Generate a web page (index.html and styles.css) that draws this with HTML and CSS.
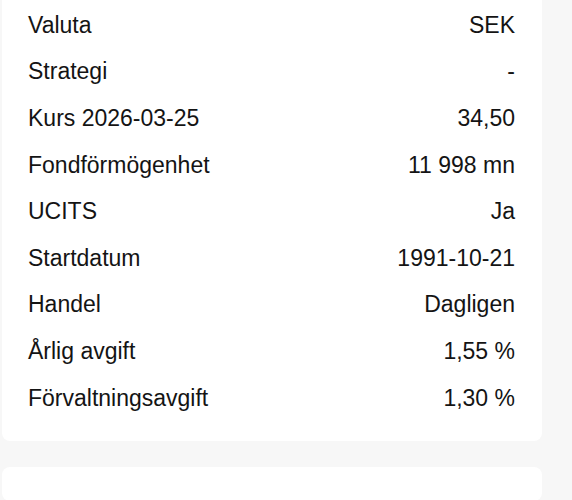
FILE: index.html
```html
<!DOCTYPE html>
<html lang="sv">
<head>
<meta charset="utf-8">
<link rel="stylesheet" href="styles.css">
</head>
<body>
<main class="page">
  <section class="card card-facts">
    <dl class="facts">
      <div class="row"><dt>Valuta</dt><dd>SEK</dd></div>
      <div class="row"><dt>Strategi</dt><dd>-</dd></div>
      <div class="row"><dt>Kurs 2026-03-25</dt><dd>34,50</dd></div>
      <div class="row"><dt>Fondförmögenhet</dt><dd>11 998 mn</dd></div>
      <div class="row"><dt>UCITS</dt><dd>Ja</dd></div>
      <div class="row"><dt>Startdatum</dt><dd>1991-10-21</dd></div>
      <div class="row"><dt>Handel</dt><dd>Dagligen</dd></div>
      <div class="row"><dt>Årlig avgift</dt><dd>1,55 %</dd></div>
      <div class="row"><dt>Förvaltningsavgift</dt><dd>1,30 %</dd></div>
    </dl>
  </section>
  <section class="card card-next"></section>
</main>
</body>
</html>
```
FILE: styles.css
```css
html, body {
  margin: 0;
  padding: 0;
  background: #f7f7f7;
}
body {
  font-family: "Liberation Sans", Arial, sans-serif;
  color: #141414;
}
.page {
  width: 540px;
  margin-left: 2px;
  display: flex;
  flex-direction: column;
  gap: 26px;
}
.card {
  background: #ffffff;
  border-radius: 8px;
}
.card-facts {
  margin-top: -18px;
  padding: 20px 27px 20px 26px;
}
.card-next {
  height: 34px;
}
.facts {
  margin: 0;
  display: flex;
  flex-direction: column;
}
.row {
  display: flex;
  justify-content: space-between;
  align-items: center;
  height: 46.6px;
  font-size: 23px;
}
.row dt, .row dd {
  margin: 0;
}
```
